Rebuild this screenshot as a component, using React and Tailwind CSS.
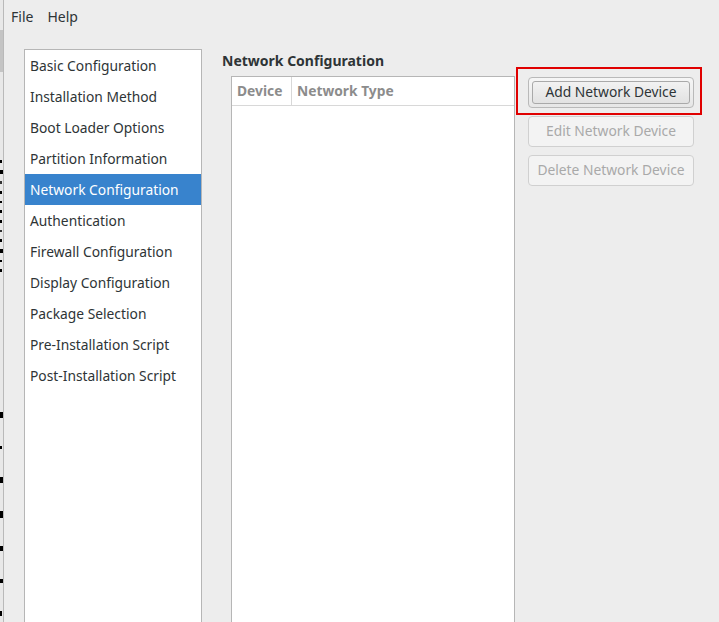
import React from "react";

const items = [
  "Basic Configuration",
  "Installation Method",
  "Boot Loader Options",
  "Partition Information",
  "Network Configuration",
  "Authentication",
  "Firewall Configuration",
  "Display Configuration",
  "Package Selection",
  "Pre-Installation Script",
  "Post-Installation Script",
];

export default function App() {
  return (
    <div
      className="relative flex w-[719px] h-[622px] overflow-hidden bg-[#ededed] text-[#2e3436]"
      style={{ fontFamily: '"Noto Sans", "DejaVu Sans", sans-serif' }}
    >
      {/* background window sliver */}
      <div className="flex flex-col w-[4px] shrink-0 border-r border-[#b9b9b9] bg-[#e8e8e8]">
        <div className="h-[30px] shrink-0" />
        <div className="h-[42px] w-[3px] shrink-0 bg-[#c4c4c4]" />
        <div className="h-[88px] shrink-0" />
        <div className="flex flex-col gap-[7px] shrink-0">
          <div className="h-[3px] w-[2px] bg-black" />
          <div className="h-[4px] w-[3px] bg-black" />
          <div className="h-[3px] w-[2px] bg-[#333]" />
          <div className="h-[3px] w-[2px] bg-black" />
          <div className="h-[2px] w-[2px] bg-black" />
          <div className="h-[3px] w-[2px] bg-black" />
          <div className="h-[3px] w-[2px] bg-black" />
          <div className="h-[2px] w-[2px] bg-[#333]" />
          <div className="h-[3px] w-[2px] bg-black" />
          <div className="h-[4px] w-[3px] bg-black" />
          <div className="h-[2px] w-[2px] bg-black" />
          <div className="h-[3px] w-[2px] bg-black" />
        </div>
        <div className="h-[140px] shrink-0" />
        <div className="flex flex-col gap-[28px] shrink-0">
          <div className="h-[6px] w-[3px] bg-black" />
          <div className="h-[3px] w-[2px] bg-black" />
          <div className="h-[6px] w-[3px] bg-black" />
          <div className="h-[7px] w-[3px] bg-black" />
          <div className="h-[5px] w-[3px] bg-black" />
          <div className="h-[4px] w-[3px] bg-black" />
          <div className="h-[5px] w-[2px] bg-black" />
        </div>
      </div>

      {/* main window */}
      <div className="flex flex-col flex-1">
        {/* menu bar */}
        <div className="flex shrink-0 items-center h-[32px] pl-[7px] gap-[14px] text-[14px] text-[#2e3436]">
          <span>File</span>
          <span>Help</span>
        </div>

        <div className="flex shrink-0 mt-[17px] pl-[20px]">
          {/* side list */}
          <div className="w-[178px] h-[600px] shrink-0 border border-[#b6b6b6] bg-white">
            {items.map((t) => (
              <div
                key={t}
                className={
                  t === "Network Configuration"
                    ? "flex items-center h-[31px] pl-[5px] pt-[1px] text-[13.8px] bg-[#3883cd] text-white"
                    : "flex items-center h-[31px] pl-[5px] pt-[1px] text-[13.8px] text-[#2e3436]"
                }
              >
                {t}
              </div>
            ))}
          </div>

          {/* content */}
          <div className="flex flex-col ml-[20px] pt-[2px]">
            <div className="h-[20px] leading-[20px] text-[14px] font-bold text-[#2e3436]">
              Network Configuration
            </div>
            <div className="flex mt-[5px] ml-[9px]">
              <div className="w-[284px] h-[560px] border border-[#b6b6b6] bg-white">
                <div className="flex h-[29px] border-b border-[#d8d8d8] text-[13.8px] font-bold text-[#8c8c8c]">
                  <div className="flex items-center w-[60px] pl-[5px] border-r border-[#d8d8d8]">
                    Device
                  </div>
                  <div className="flex items-center pl-[5px]">Network Type</div>
                </div>
              </div>

              <div className="flex flex-col gap-[8px] ml-[13px] mt-[1px]">
                <button className="relative flex items-center justify-center w-[166px] h-[31px] rounded-[4px] border border-[#b9b9b9] bg-gradient-to-b from-[#f6f6f6] to-[#e6e6e6] text-[13.8px] text-[#2e3436]">
                  <span className="absolute inset-[3px] rounded-[3px] border border-[#a9a9a9] bg-gradient-to-b from-[#f2f2f2] to-[#e2e2e2]" />
                  <span className="relative">Add Network Device</span>
                </button>
                <button className="flex items-center justify-center w-[166px] h-[31px] rounded-[4px] border border-[#d0d0d0] bg-[#f3f3f3] text-[13.8px] text-[#a9a9a9]">
                  Edit Network Device
                </button>
                <button className="flex items-center justify-center w-[166px] h-[31px] rounded-[4px] border border-[#d0d0d0] bg-[#f3f3f3] text-[13.8px] text-[#a9a9a9]">
                  Delete Network Device
                </button>
              </div>
            </div>
          </div>
        </div>
      </div>

      {/* red highlight annotation */}
      <div className="absolute left-[516px] top-[67px] w-[186px] h-[48px] border-2 border-[#e00000]" />
    </div>
  );
}
